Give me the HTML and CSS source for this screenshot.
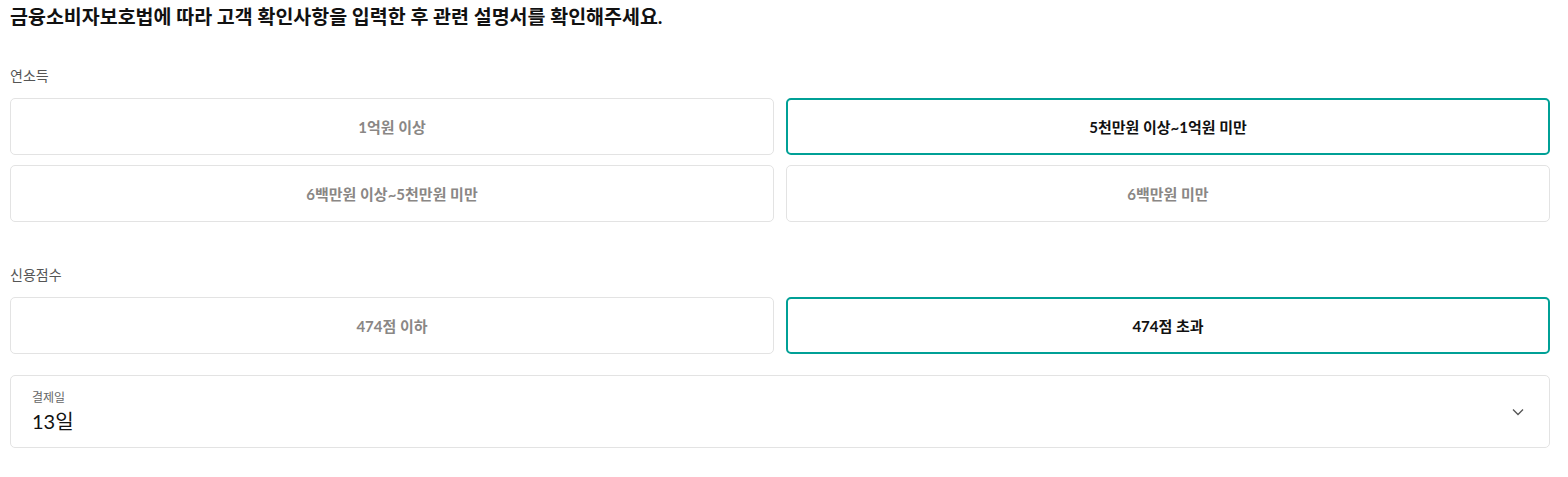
FILE: index.html
```html
<!DOCTYPE html>
<html lang="ko">
<head>
    <meta charset="UTF-8">
    <meta name="viewport" content="width=device-width, initial-scale=1.0">
    <title>고객 확인사항</title>
    <link rel="stylesheet" href="styles.css">
</head>
<body>
    <div class="page">
        <h1 class="title">금융소비자보호법에 따라 고객 확인사항을 입력한 후 관련 설명서를 확인해주세요.</h1>

        <div class="field">
            <div class="label">연소득</div>
            <div class="choices">
                <button class="choice">1억원 이상</button>
                <button class="choice on">5천만원 이상~1억원 미만</button>
                <button class="choice">6백만원 이상~5천만원 미만</button>
                <button class="choice">6백만원 미만</button>
            </div>
        </div>

        <div class="field">
            <div class="label">신용점수</div>
            <div class="choices">
                <button class="choice">474점 이하</button>
                <button class="choice on">474점 초과</button>
            </div>
        </div>

        <div class="select">
            <div class="select-text">
                <div class="select-label">결제일</div>
                <div class="select-value">13일</div>
            </div>
            <svg class="chevron" width="14" height="14" viewBox="0 0 14 14">
                <path d="M2 4.5 L7 9.5 L12 4.5" fill="none" stroke="#555" stroke-width="1.3"/>
            </svg>
        </div>
    </div>
</body>
</html>
```

FILE: styles.css
```css
body {
  margin: 0;
  font-family: Lato, "Noto Sans CJK KR", sans-serif;
  color: #111;
  background: #fff;
}

.page {
  padding: 3px 18px 0 10px;
}

.title {
  margin: 0;
  font-size: 19.5px;
  line-height: 28px;
  font-weight: 700;
  color: #111;
}

.field {
  margin-top: 35px;
}
.field + .field {
  margin-top: 43px;
}

.label {
  font-size: 14px;
  line-height: 20px;
  color: #555;
  margin-bottom: 12px;
}

.choices {
  display: grid;
  grid-template-columns: 1fr 1fr;
  gap: 10px 12px;
}

.choice {
  height: 57px;
  border: 1px solid #e3e3e3;
  border-radius: 5px;
  background: #fff;
  font-family: inherit;
  font-size: 15px;
  font-weight: 700;
  color: #8a8785;
  padding: 0;
}

.choice.on {
  border: 2px solid #00a096;
  color: #111;
}

.select {
  margin-top: 21px;
  height: 73px;
  box-sizing: border-box;
  border: 1px solid #e3e3e3;
  border-radius: 5px;
  display: flex;
  align-items: center;
  justify-content: space-between;
  padding: 0 24px 0 21px;
}

.select-label {
  font-size: 12px;
  line-height: 16px;
  color: #666;
}

.select-value {
  font-size: 20px;
  line-height: 26px;
  color: #111;
  margin-top: 2px;
}

.chevron {
  display: block;
}
```
